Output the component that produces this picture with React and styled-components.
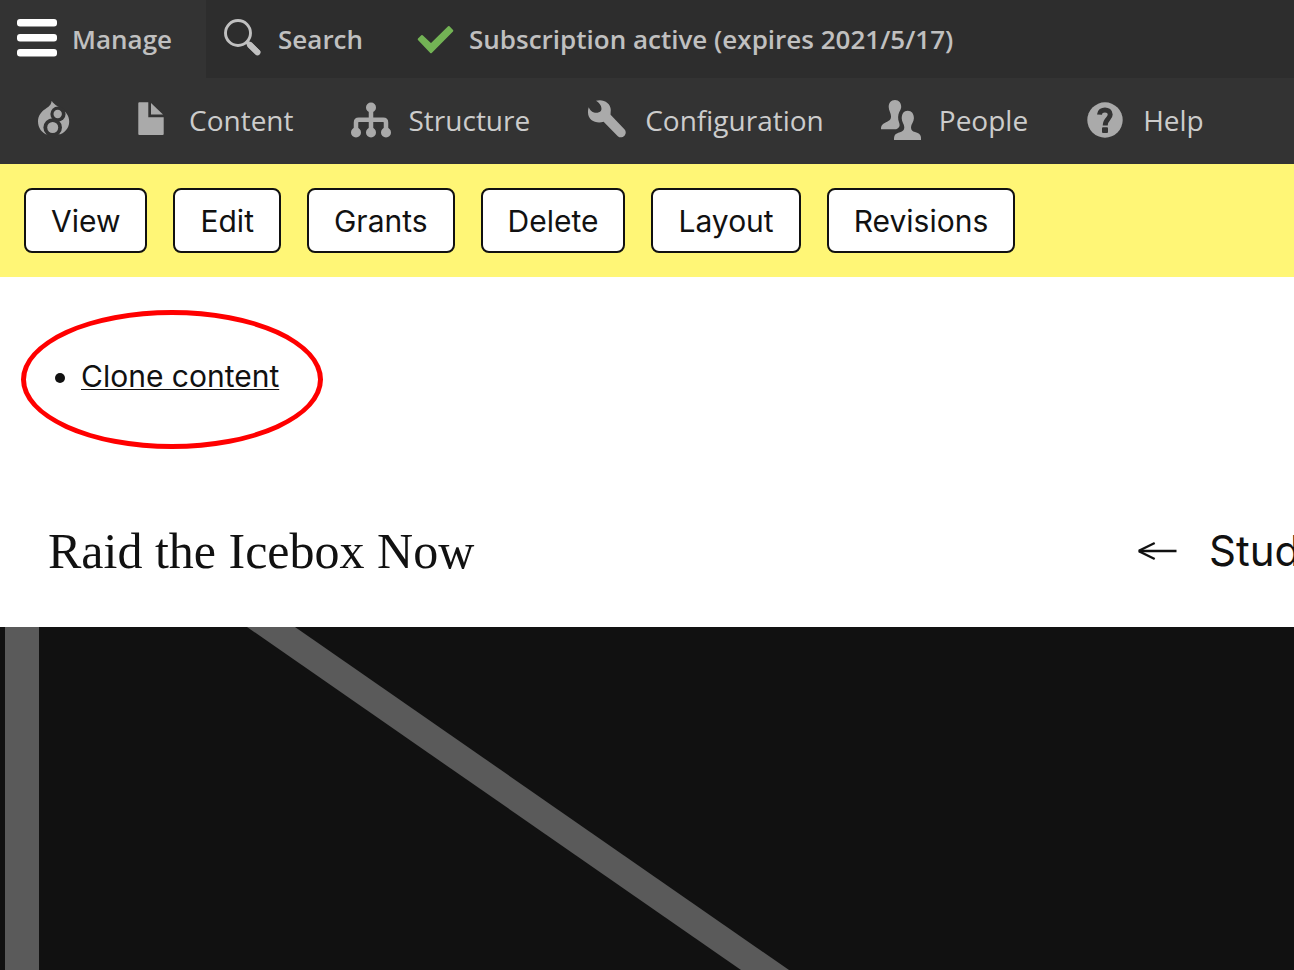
import React from "react";
import styled, { createGlobalStyle } from "styled-components";

const GlobalStyle = createGlobalStyle`
  * {
    box-sizing: border-box;
  }

  body {
    margin: 0;
    background: #fff;
    color: #111;
    font-family: Inter, "Liberation Sans", sans-serif;
  }
`;

const Page = styled.div`
  display: flex;
  flex-direction: column;
  min-height: 100vh;
  overflow-x: hidden;
`;

const Icon = styled.svg`
  display: block;
  flex: none;
  width: 40px;
  height: 40px;
`;

const ToolbarBar = styled.nav`
  display: flex;
  height: 78px;
  background: #2d2d2d;
  font-family: "Open Sans", sans-serif;
`;

const ToolbarTab = styled.button`
  display: flex;
  align-items: center;
  gap: 15px;
  padding: 0 34px 0 17px;
  border: 0;
  background: ${({ $active }) => ($active ? "#333" : "transparent")};
  color: #c0c0c0;
  font: 600 26px/36px "Open Sans", sans-serif;
  white-space: nowrap;
  cursor: pointer;
`;

const Tray = styled.nav`
  display: flex;
  align-items: center;
  gap: 57px;
  height: 86px;
  padding: 0 34px 2px;
  background: #333;
`;

const TrayLink = styled.a`
  display: flex;
  align-items: center;
  gap: 18px;
  color: #ccc;
  font: 400 28px/40px "Open Sans", sans-serif;
  text-decoration: none;
  white-space: nowrap;
`;

const LocalTasks = styled.nav`
  display: flex;
  gap: 26px;
  padding: 24px;
  background: #fff676;
`;

const TaskLink = styled.a`
  padding: 13px 25px 12px;
  border: 2px solid #111;
  border-radius: 8px;
  background: #fff;
  color: #111;
  font-size: 30px;
  line-height: 36px;
  text-decoration: none;
`;

const Actions = styled.section`
  padding: 33px 21px;
`;

const ActionList = styled.ul`
  position: relative;
  width: 302px;
  margin: 0;
  padding: 46px 0 53px 60px;
  font-size: 30px;
  line-height: 40px;

  &::after {
    content: "";
    position: absolute;
    inset: 0;
    border: 5px solid #f00;
    border-radius: 50%;
    pointer-events: none;
  }

  a {
    color: #111;
    text-decoration-thickness: 1px;
    text-underline-offset: 2px;
  }
`;

const Masthead = styled.header`
  display: grid;
  grid-template-columns: 1fr 157px;
  align-items: center;
  height: 145px;
  padding: 0 0 7px 48px;
`;

const Title = styled.h1`
  margin: 0;
  font: 400 50px/60px "Liberation Serif", serif;
`;

const BackLink = styled.a`
  display: flex;
  align-items: center;
  gap: 32px;
  color: #111;
  font-size: 42px;
  line-height: 60px;
  text-decoration: none;
  white-space: nowrap;
`;

const Hero = styled.main`
  display: flex;
  flex: 1 0 343px;
  background: #111;

  svg {
    flex: 1;
    width: 100%;
  }
`;

const MenuIcon = () => (
  <Icon viewBox="0 0 40 40" fill="#fff" aria-hidden="true">
    <rect width="40" height="7.6" rx="3" />
    <rect width="40" y="15" height="7.6" rx="3" />
    <rect width="40" y="30" height="7.6" rx="3" />
  </Icon>
);

const SearchIcon = () => (
  <Icon viewBox="0 0 40 40" fill="none" stroke="#c0c0c0" aria-hidden="true">
    <circle cx="15" cy="14" r="12.5" strokeWidth="2.9" />
    <path d="M23.5 22.5l3 3" strokeWidth="4" />
    <path d="M26.500 25.500l9 8.800" strokeWidth="5.600" strokeLinecap="butt" />
    <path d="M27 26l7.500 7.300" strokeWidth="6" strokeLinecap="round" />
  </Icon>
);

const CheckIcon = () => (
  <Icon viewBox="0 0 40 40" fill="#73b355" stroke="#73b355" strokeWidth="2" strokeLinejoin="round" aria-hidden="true">
    <path d="M4.700 20.300L8 17l9 8.500L34.800 8l3.500 3.700L17 33.300z" />
  </Icon>
);

const DrupalIcon = () => (
  <Icon viewBox="0 0 40 40" fill="#aaa" aria-hidden="true">
    <path d="M17.7.7c2.5 4.2 5.6 5 9.6 7.9C32 11.9 35.2 16 35.2 21.6c0 6.5-4.400 11.9-11.4 13.6H14C7.800 33 4 27.600 4 21.400c0-5.700 3.100-9.700 7.400-12.500C15 6.600 17 5 17.700.700z" />
    <circle cx="24" cy="14" r="7.600" fill="#333" />
    <circle cx="18.700" cy="27.500" r="9.300" fill="#333" />
    <path d="M12 34.200l3 3h9l2-3z" fill="#333" />
    <circle cx="23.700" cy="14" r="4.200" />
    <circle cx="18.700" cy="27.500" r="5.500" />
  </Icon>
);

const ContentIcon = () => (
  <Icon viewBox="0 0 40 40" fill="#aaa" aria-hidden="true">
    <path d="M8.300 2.300h9v15h15.400V34a1 1 0 0 1-1 1H8.300a1 1 0 0 1-1-1V3.300a1 1 0 0 1 1-1z" />
    <path d="M20 3v11.500h12z" />
  </Icon>
);

const StructureIcon = () => (
  <Icon viewBox="0 0 40 40" fill="#aaa" aria-hidden="true">
    <path d="M5 31v-8.500q0-2.800 2.800-2.800h24.400q2.800 0 2.800 2.800V31M20 8v24" fill="none" stroke="#aaa" strokeWidth="4.500" />
    <circle cx="20" cy="7.500" r="5" />
    <circle cx="5" cy="32.500" r="5" />
    <circle cx="20" cy="32.500" r="5" />
    <circle cx="35" cy="32.500" r="5" />
  </Icon>
);

const WrenchIcon = () => (
  <Icon viewBox="0 0 40 40" fill="#aaa" aria-hidden="true">
    <path d="M9 .8C15.500-1.500 23.800 2.500 23.800 10c0 1.800-.4 3.400-.2 4.800L37.400 29.200c4 4.400-2 10.800-6.600 7L16.600 21.800C9.500 24.200 1 20.500 1 12.500c0-2 .1-3.600.8-5.200.8 2.400 2.700 4.600 5.200 5.200 2.600.6 5.600 0 7-1.800C15.600 7.500 12.800 2.700 9 .8z" />
  </Icon>
);

const PeopleIcon = () => (
  <Icon viewBox="0 0 40 40" fill="#aaa" aria-hidden="true">
    <path d="M14 0c4 0 6.200 3 6.200 7-.1 2-1 3.200-1.800 4.800-1.600 3-1.600 7.500-.4 10.500.8 2 .8 3.500.2 4.500-.6 1-1.800 2-3 2.500H0c0-4 1.500-5.300 5-7 3.500-1.700 5-2.300 5-6C10 13 7.700 10.500 7.700 7 7.700 3 9.800 0 14 0z" />
    <path
      d="M26.700 10.700c4 0 6.200 3 6.200 7.500 0 3.500-2.900 6-2.900 9s1.500 4 4 4.800c4 1.200 6 2.500 6 6.500V40H13c0-5 1-6.300 6-7.800 2.700-.8 4.300-2 4.300-5s-2.600-5.500-2.600-9c0-4.500 2-7.500 6-7.500z"
      stroke="#333"
      strokeWidth="3"
      paintOrder="stroke"
    />
  </Icon>
);

const HelpIcon = () => (
  <Icon viewBox="0 0 40 40" fill="none" aria-hidden="true">
    <circle cx="20" cy="20" r="17.700" fill="#aaa" />
    <path d="M14.500 14.600C14.800 8.300 25.200 8.300 25.200 14.600c0 4.400-5 4.400-5 10.900" stroke="#333" strokeWidth="5" />
    <rect x="17" y="27.300" width="6" height="5.700" rx="1" fill="#333" />
  </Icon>
);

const ArrowIcon = () => (
  <Icon viewBox="0 0 40 40" fill="none" stroke="#111" aria-hidden="true">
    <path d="M2 20h37.500" strokeWidth="2.600" />
    <path d="M17.700 12L2.500 19.500v1L17.700 28" strokeWidth="2.300" />
  </Icon>
);

const trayItems = [
  { label: "Content", icon: ContentIcon },
  { label: "Structure", icon: StructureIcon },
  { label: "Configuration", icon: WrenchIcon },
  { label: "People", icon: PeopleIcon },
  { label: "Help", icon: HelpIcon },
];

const tasks = ["View", "Edit", "Grants", "Delete", "Layout", "Revisions"];

const App = () => (
  <Page>
    <GlobalStyle />
    <ToolbarBar aria-label="Toolbar">
      <ToolbarTab type="button" $active>
        <MenuIcon />
        Manage
      </ToolbarTab>
      <ToolbarTab type="button">
        <SearchIcon />
        Search
      </ToolbarTab>
      <ToolbarTab type="button">
        <CheckIcon />
        Subscription active (expires 2021/5/17)
      </ToolbarTab>
    </ToolbarBar>
    <Tray aria-label="Administration">
      <TrayLink href="#" aria-label="Home">
        <DrupalIcon />
      </TrayLink>
      {trayItems.map(({ label, icon: ItemIcon }) => (
        <TrayLink href="#" key={label}>
          <ItemIcon />
          {label}
        </TrayLink>
      ))}
    </Tray>
    <LocalTasks aria-label="Tasks">
      {tasks.map((task) => (
        <TaskLink href="#" key={task}>{task}</TaskLink>
      ))}
    </LocalTasks>
    <Actions>
      <ActionList>
        <li><a href="#">Clone content</a></li>
      </ActionList>
    </Actions>
    <Masthead>
      <Title>Raid the Icebox Now</Title>
      <BackLink href="#">
        <ArrowIcon />
        Stud
      </BackLink>
    </Masthead>
    <Hero>
      <svg viewBox="0 0 1294 343" preserveAspectRatio="xMinYMin slice" fill="#5a5a5a" aria-hidden="true">
        <path d="M5 0h34v343H5z" />
        <path d="M247 0h48l494 343h-48z" />
      </svg>
    </Hero>
  </Page>
);

export default App;
